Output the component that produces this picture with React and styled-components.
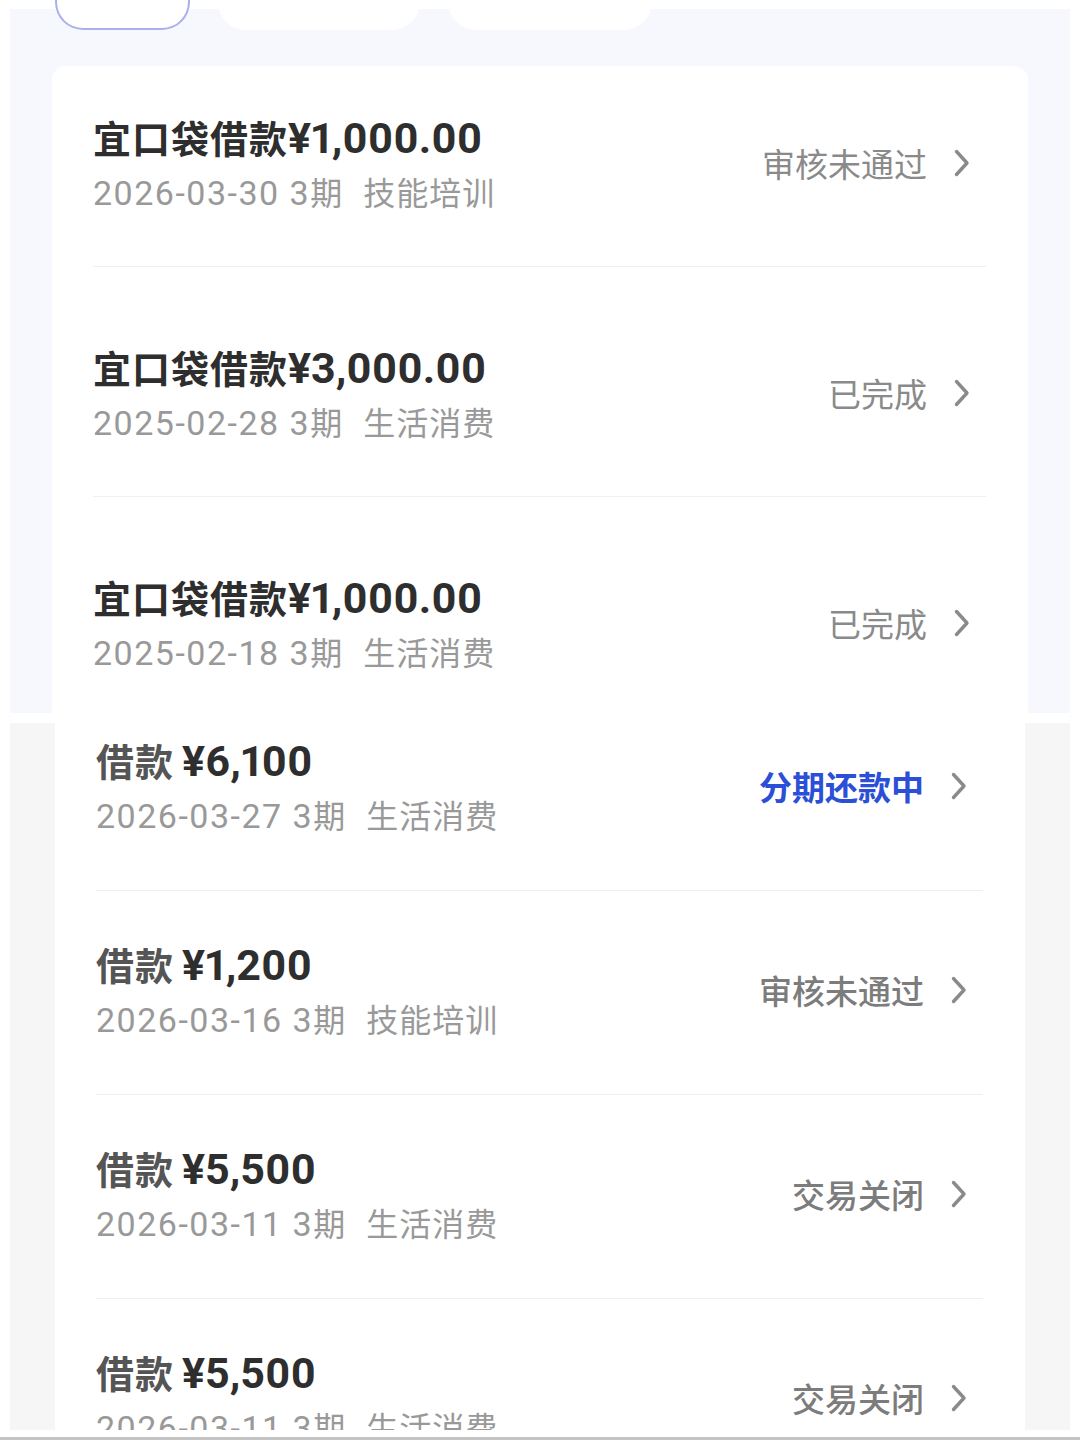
import React from 'react'
import styled, { createGlobalStyle } from 'styled-components'

const GlobalStyle = createGlobalStyle`
    html, body {
        margin: 0;
        padding: 0;
        background: #ffffff;
    }
    body {
        font-family: Roboto, "Noto Sans CJK SC", sans-serif;
        -webkit-font-smoothing: antialiased;
    }
`

const Page = styled.div`
    width: 1080px;
    height: 1440px;
    overflow: hidden;
    background: #ffffff;
`

const TopPanel = styled.section`
    margin: 9px 10px 0;
    height: 704px;
    background: #f7f8fd;
    display: flex;
    flex-direction: column;
`

const TabBar = styled.div`
    display: flex;
    gap: 28px;
    padding-left: 45px;
    margin-top: -29px;
`

const Tab = styled.div`
    width: ${p => p.w}px;
    height: 50px;
    box-sizing: border-box;
    border-radius: 0 0 28px 28px;
    background: #ffffff;
    border: ${p => (p.active ? '2px solid #aab1ea' : 'none')};
    border-top: none;
`

const Clip = styled.div`
    flex: 1;
    overflow: hidden;
    padding: 36px 42px 0;
`

const BottomPanel = styled.section`
    margin: 10px 10px 0;
    height: 707px;
    background: #f6f6f6;
    overflow: hidden;
    padding: 0 45px;
`

const Card = styled.div`
    background: #ffffff;
    border-radius: ${p => (p.flatTop ? '0' : '14px 14px 0 0')};
    min-height: 100%;
`

const Row = styled.div`
    display: flex;
    align-items: center;
    justify-content: space-between;
    margin: 0 42px 0 41px;
    padding: ${p => p.pt}px 16px ${p => p.pb}px 0;
    border-bottom: 1px solid #efefef;
`

const Info = styled.div`
    display: flex;
    flex-direction: column;
`

const Title = styled.div`
    height: 48px;
    line-height: 48px;
    white-space: nowrap;
    display: flex;
    align-items: baseline;
`

const Label = styled.span`
    font-family: "Noto Sans CJK SC", sans-serif;
    font-size: 38px;
    font-weight: 700;
    letter-spacing: 1px;
    color: ${p => (p.muted ? '#555555' : '#2e2e2e')};
    margin-right: ${p => (p.muted ? 8 : 0)}px;
`

const Amount = styled.span`
    font-family: Roboto, sans-serif;
    font-size: 43px;
    font-weight: 700;
    font-variant-numeric: proportional-nums;
    color: #2e2e2e;
`

const Sub = styled.div`
    margin-top: 8px;
    height: 44px;
    line-height: 44px;
    font-family: "Noto Sans CJK SC", sans-serif;
    font-size: 32px;
    letter-spacing: 1px;
    color: #999999;
    white-space: nowrap;
`

const DateText = styled.span`
    font-family: Roboto, sans-serif;
    font-size: 34px;
    letter-spacing: 1.5px;
`

const Category = styled.span`
    margin-left: 20px;
`

const Status = styled.div`
    display: flex;
    align-items: center;
    gap: 27px;
    font-family: "Noto Sans CJK SC", sans-serif;
    font-size: 33px;
    font-weight: ${p => (p.blue ? 700 : p.heavy ? 500 : 400)};
    color: ${p => (p.blue ? '#2b4fd6' : p.heavy ? '#7c7c7c' : '#8a8a8a')};
    white-space: nowrap;
`

const BottomEdge = styled.div`
    margin-top: 7px;
    height: 3px;
    background: #c4c4c4;
`

const Chevron = () => (
    <svg width="16" height="28" viewBox="0 0 16 28">
        <polyline points="2.5,2.5 13,14 2.5,25.5" fill="none" stroke="#8a8a8a" strokeWidth="3.4" strokeLinecap="round" strokeLinejoin="round"/>
    </svg>
)

const topLoans = [
    {amount: '¥1,000.00', date: '2026-03-30', cat: '技能培训', status: '审核未通过'},
    {amount: '¥3,000.00', date: '2025-02-28', cat: '生活消费', status: '已完成'},
    {amount: '¥1,000.00', date: '2025-02-18', cat: '生活消费', status: '已完成'},
]

const bottomLoans = [
    {amount: '¥6,100', date: '2026-03-27', cat: '生活消费', status: '分期还款中', blue: true},
    {amount: '¥1,200', date: '2026-03-16', cat: '技能培训', status: '审核未通过'},
    {amount: '¥5,500', date: '2026-03-11', cat: '生活消费', status: '交易关闭'},
    {amount: '¥5,500', date: '2026-03-11', cat: '生活消费', status: '交易关闭'},
]

const LoanRow = ({item, label, muted, pt, pb, heavy}) => (
    <Row pt={pt} pb={pb}>
        <Info>
            <Title>
                <Label muted={muted}>{label}</Label>
                <Amount>{item.amount}</Amount>
            </Title>
            <Sub><DateText>{item.date} 3</DateText>期<Category>{item.cat}</Category></Sub>
        </Info>
        <Status blue={item.blue} heavy={heavy}>
            {item.status}
            <Chevron/>
        </Status>
    </Row>
)

const App = () => {
    return (
        <Page>
            <GlobalStyle/>
            <TopPanel>
                <TabBar>
                    <Tab w={135} active/>
                    <Tab w={202}/>
                    <Tab w={204}/>
                </TabBar>
                <Clip>
                    <Card>
                        {topLoans.map((item, i) => (
                            <LoanRow key={i} item={item} label="宜口袋借款" pt={i === 0 ? 47 : 76} pb={53}/>
                        ))}
                    </Card>
                </Clip>
            </TopPanel>
            <BottomPanel>
                <Card flatTop>
                    {bottomLoans.map((item, i) => (
                        <LoanRow key={i} item={item} label="借款" muted heavy pt={i === 0 ? 13 : 49} pb={54}/>
                    ))}
                </Card>
            </BottomPanel>
            <BottomEdge/>
        </Page>
    )
}

export default App
